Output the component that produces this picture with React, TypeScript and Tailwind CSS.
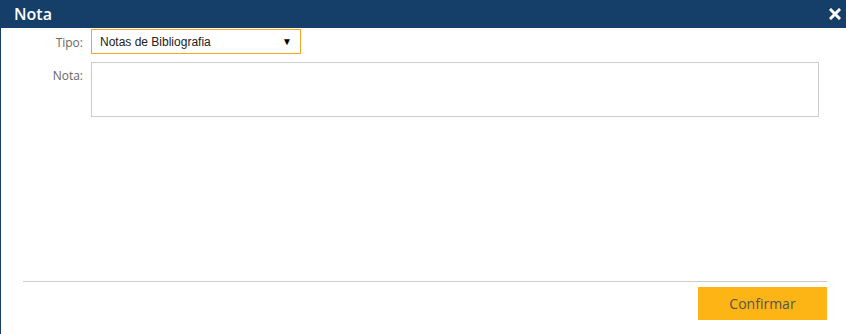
import React from "react";

export default function App() {
  return (
    <div className="w-[846px] h-[334px] bg-white flex flex-col border-l border-[#153f69] overflow-hidden" style={{ fontFamily: '"Open Sans", "Noto Sans", Arial, sans-serif' }}>
      <div className="h-[28px] bg-[#153f69] flex items-center justify-between pl-[13px] pr-[5px] shrink-0">
        <span className="text-white font-semibold text-[16px] leading-none">Nota</span>
        <svg width="12" height="12" viewBox="0 0 12 12">
          <path d="M2 2 L10 10 M10 2 L2 10" stroke="white" strokeWidth="3" strokeLinecap="square" />
        </svg>
      </div>
      <div className="flex items-start mt-[1px]">
        <div className="w-[82px] text-right text-[12px] text-[#666] leading-[25px] pt-[1px]">Tipo:</div>
        <div className="ml-[8px] w-[210px] h-[25px] border border-[#f5a623] flex items-center justify-between pl-[8px] pr-[8px] text-[12px] text-[#222]">
          <span style={{ fontFamily: '"Liberation Sans", Arial, sans-serif' }}>Notas de Bibliografia</span>
          <span className="text-[10px] text-black">▼</span>
        </div>
      </div>
      <div className="flex items-start mt-[7px]">
        <div className="w-[82px] text-right text-[12px] text-[#666] pt-[8px] leading-none">Nota:</div>
        <div className="ml-[8px] w-[728px] h-[55px] border border-[#cccccc]"></div>
      </div>
      <div className="flex-1"></div>
      <div className="ml-[22px] w-[804px] h-px bg-[#cccccc]"></div>
      <div className="flex justify-end w-[826px] mt-[5px] mb-[14px]">
        <button className="w-[129px] h-[33px] bg-[#fdb415] text-[#555] text-[14px]">Confirmar</button>
      </div>
    </div>
  );
}
